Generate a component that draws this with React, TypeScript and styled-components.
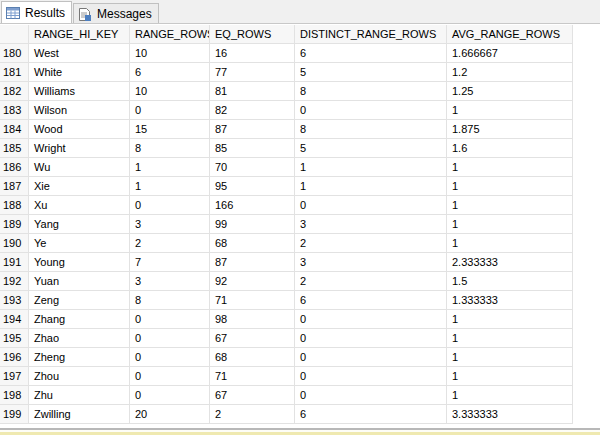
import React from "react";
import styled, { createGlobalStyle } from "styled-components";

const Global = createGlobalStyle`
  body { margin: 0; background: #fff; font-family: "Liberation Sans", Arial, sans-serif; font-size: 11px; color: #000; }
`;

const rows: [number, string, number, number, number, string][] = [
  [180, "West", 10, 16, 6, "1.666667"],
  [181, "White", 6, 77, 5, "1.2"],
  [182, "Williams", 10, 81, 8, "1.25"],
  [183, "Wilson", 0, 82, 0, "1"],
  [184, "Wood", 15, 87, 8, "1.875"],
  [185, "Wright", 8, 85, 5, "1.6"],
  [186, "Wu", 1, 70, 1, "1"],
  [187, "Xie", 1, 95, 1, "1"],
  [188, "Xu", 0, 166, 0, "1"],
  [189, "Yang", 3, 99, 3, "1"],
  [190, "Ye", 2, 68, 2, "1"],
  [191, "Young", 7, 87, 3, "2.333333"],
  [192, "Yuan", 3, 92, 2, "1.5"],
  [193, "Zeng", 8, 71, 6, "1.333333"],
  [194, "Zhang", 0, 98, 0, "1"],
  [195, "Zhao", 0, 67, 0, "1"],
  [196, "Zheng", 0, 68, 0, "1"],
  [197, "Zhou", 0, 71, 0, "1"],
  [198, "Zhu", 0, 67, 0, "1"],
  [199, "Zwilling", 20, 2, 6, "3.333333"],
];

const cols = "29px 101px 80px 85px 152px 126px";

const Page = styled.div`
  width: 600px;
  height: 437px;
  display: flex;
  flex-direction: column;
  overflow: hidden;
`;
const TabBar = styled.div`
  height: 24px;
  display: flex;
  align-items: flex-end;
  background: #f0f0f0;
  border-bottom: 1px solid #c8c8c8;
  box-sizing: border-box;
  padding-left: 1px;
`;
const Tab = styled.div<{ $active?: boolean }>`
  height: ${(p) => (p.$active ? "22px" : "20px")};
  display: flex;
  align-items: center;
  gap: 5px;
  padding: 0 6px 0 4px;
  background: ${(p) => (p.$active ? "#fff" : "#ececec")};
  border: 1px solid #c0c0c0;
  border-bottom: none;
  box-sizing: border-box;
  font-size: 12px;
  margin-right: 1px;
`;
const Grid = styled.div`
  display: grid;
  grid-template-columns: ${cols};
  grid-auto-rows: 19px;
  width: 573px;
  margin-top: 1px;
`;
const Cell = styled.div<{ $head?: boolean; $num?: boolean }>`
  border-right: 1px solid #e2e2e2;
  border-bottom: 1px solid #e2e2e2;
  background: ${(p) => (p.$head || p.$num ? "#f7f7f7" : "#fff")};
  padding-left: ${(p) => (p.$num ? "3px" : "5px")};
  line-height: 18px;
  white-space: nowrap;
  overflow: hidden;
  box-sizing: border-box;
`;
const Spacer = styled.div`
  flex: 1;
`;
const Bottom = styled.div`
  height: 2px;
  border-top: 2px solid #b8b8b8;
  border-bottom: 3px solid #efe9b0;
  background: #fdfdf6;
  margin-bottom: 2px;
`;

const GridIcon = () => (
  <svg width="14" height="12" viewBox="0 0 14 12">
    <rect x="0.5" y="0.5" width="13" height="11" fill="#fff" stroke="#5a7fb0" />
    <rect x="1" y="1" width="12" height="2.5" fill="#7f9fcf" />
    <path d="M1 6h12M1 8.5h12M5 3.5v8M9 3.5v8" stroke="#7f9fcf" />
  </svg>
);
const MsgIcon = () => (
  <svg width="14" height="16" viewBox="0 0 14 16">
    <path d="M1.5 2.5h7l3 3v9h-10z" fill="#fff" stroke="#777" />
    <path d="M3 7h6M3 9h6M3 11h6" stroke="#999" />
    <rect x="7" y="9" width="6" height="6" fill="#4d7fc0" />
  </svg>
);

export default function App() {
  const head = ["", "RANGE_HI_KEY", "RANGE_ROWS", "EQ_ROWS", "DISTINCT_RANGE_ROWS", "AVG_RANGE_ROWS"];
  return (
    <Page>
      <Global />
      <TabBar>
        <Tab $active>
          <GridIcon />
          Results
        </Tab>
        <Tab>
          <MsgIcon />
          Messages
        </Tab>
      </TabBar>
      <Grid>
        {head.map((h, i) => (
          <Cell key={i} $head>
            {h}
          </Cell>
        ))}
        {rows.map((r) =>
          r.map((v, i) => (
            <Cell key={`${r[0]}-${i}`} $num={i === 0}>
              {v}
            </Cell>
          ))
        )}
      </Grid>
      <Spacer />
      <Bottom />
    </Page>
  );
}
